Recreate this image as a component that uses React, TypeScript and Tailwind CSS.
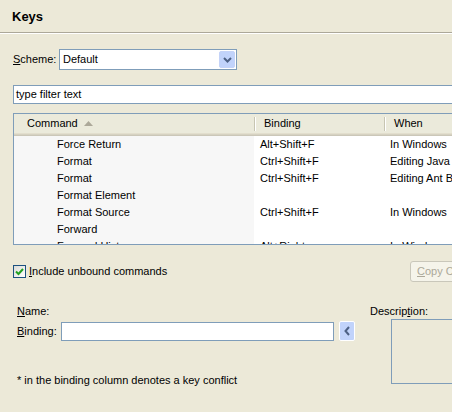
import React from 'react'

const rows = [
    { cmd: 'Force Return', binding: 'Alt+Shift+F', when: 'In Windows' },
    { cmd: 'Format', binding: 'Ctrl+Shift+F', when: 'Editing Java Source' },
    { cmd: 'Format', binding: 'Ctrl+Shift+F', when: 'Editing Ant Buildfiles' },
    { cmd: 'Format Element', binding: '', when: '' },
    { cmd: 'Format Source', binding: 'Ctrl+Shift+F', when: 'In Windows' },
    { cmd: 'Forward', binding: '', when: '' },
    { cmd: 'Forward History', binding: 'Alt+Right', when: 'In Windows' },
]

function ChevronDown() {
    return (
        <svg width="9" height="6" viewBox="0 0 9 6">
            <path d="M1 1 L4.5 4.5 L8 1" fill="none" stroke="#4D6185" strokeWidth="2" />
        </svg>
    )
}

function ChevronLeft() {
    return (
        <svg width="6" height="10" viewBox="0 0 6 10">
            <path d="M5 1 L1.5 5 L5 9" fill="none" stroke="#4D6185" strokeWidth="2" />
        </svg>
    )
}

function HeaderDivider() {
    return (
        <div className="flex shrink-0 h-[14px] self-center">
            <div className="w-px bg-[#C7C5B2]" />
            <div className="w-px bg-white" />
        </div>
    )
}

export default function App() {
    return (
        <div
            className="w-[452px] h-[412px] overflow-hidden bg-[#ECE9D8] text-[11px] text-black leading-[13px]"
            style={{ fontFamily: '"Liberation Sans", Arial, sans-serif' }}
        >
            {/* title */}
            <div className="h-[33px] flex items-center px-[12px] border-b border-[#ACA899]">
                <span className="text-[13px] font-bold">Keys</span>
            </div>
            <div className="h-px bg-white" />

            <div className="pl-[13px] w-[480px]">
                {/* scheme */}
                <div className="mt-[15px] flex items-center">
                    <span className="w-[46px] shrink-0">
                        <span className="underline">S</span>cheme:
                    </span>
                    <div className="w-[178px] h-[21px] border border-[#7F9DB9] bg-white flex items-center justify-between p-px">
                        <span className="pl-[2px]">Default</span>
                        <div className="w-[16px] h-[17px] rounded-[2px] border border-[#C4D3F8] bg-[#C1D3FB] flex items-center justify-center">
                            <ChevronDown />
                        </div>
                    </div>
                </div>

                {/* filter */}
                <div className="mt-[15px] h-[19px] w-[460px] border border-[#7F9DB9] bg-white flex items-center pl-[2px]">
                    type filter text
                </div>

                {/* table */}
                <div className="mt-[9px] h-[132px] w-[460px] border border-[#7F9DB9] bg-white overflow-hidden">
                    <div className="h-[19px] bg-[#EBEADB] flex">
                        <div className="w-[240px] shrink-0 flex items-center pl-[13px]">
                            <span>Command</span>
                            <svg className="ml-[6px]" width="9" height="5" viewBox="0 0 9 5">
                                <path d="M0 5 L4.5 0 L9 5 Z" fill="#ACA899" />
                            </svg>
                        </div>
                        <HeaderDivider />
                        <div className="w-[128px] shrink-0 flex items-center pl-[8px]">Binding</div>
                        <HeaderDivider />
                        <div className="flex items-center pl-[8px]">When</div>
                    </div>
                    <div className="h-px bg-[#E2DECD]" />
                    <div className="h-px bg-[#D6D2C2]" />
                    <div className="h-px bg-[#CBC7B8]" />
                    {rows.map((row, i) => (
                        <div key={i} className="h-[17px] flex items-center">
                            <div className="w-[240px] shrink-0 h-full bg-[#F7F7F7] flex items-center pl-[43px] whitespace-nowrap">
                                {row.cmd}
                            </div>
                            <div className="w-[130px] shrink-0 pl-[6px] whitespace-nowrap">{row.binding}</div>
                            <div className="pl-[6px] whitespace-nowrap">{row.when}</div>
                        </div>
                    ))}
                </div>

                {/* include unbound + copy */}
                <div className="mt-[16px] flex items-center h-[21px]">
                    <div className="w-[13px] h-[13px] shrink-0 border border-[#1C5180] bg-gradient-to-br from-[#DCDCD7] to-white flex items-center justify-center">
                        <svg width="9" height="8" viewBox="0 0 9 8">
                            <path d="M1 3.5 L3.5 6 L8 1" fill="none" stroke="#21A121" strokeWidth="2" />
                        </svg>
                    </div>
                    <span className="ml-[3px] whitespace-nowrap">
                        <span className="underline">I</span>nclude unbound commands
                    </span>
                    <div className="ml-auto w-[70px] shrink-0 h-[21px] overflow-hidden whitespace-nowrap rounded-[3px] border border-[#C9C7BA] bg-[#F5F4EA] flex items-center pl-[6px] text-[#ACA899]">
                        <span className="underline">C</span>opy Command
                    </div>
                </div>

                {/* name / binding / description */}
                <div className="mt-[23px] flex">
                    <div className="pl-[4px] flex flex-col">
                        <span>
                            <span className="underline">N</span>ame:
                        </span>
                        <div className="mt-[3px] flex items-center">
                            <span className="w-[44px] shrink-0">
                                <span className="underline">B</span>inding:
                            </span>
                            <div className="w-[273px] h-[19px] border border-[#7F9DB9] bg-white" />
                            <div className="ml-[5px] w-[16px] h-[20px] rounded-[2px] border border-white bg-[#C1D3FB] flex items-center justify-center">
                                <ChevronLeft />
                            </div>
                        </div>
                        <span className="mt-[33px] whitespace-nowrap">* in the binding column denotes a key conflict</span>
                    </div>
                    <div className="ml-[15px] flex flex-col">
                        <span>
                            Descrip<span className="underline">t</span>ion:
                        </span>
                        <div className="ml-[21px] mt-[1px] w-[80px] h-[65px] border border-[#7F9DB9]" />
                    </div>
                </div>
            </div>
        </div>
    )
}
